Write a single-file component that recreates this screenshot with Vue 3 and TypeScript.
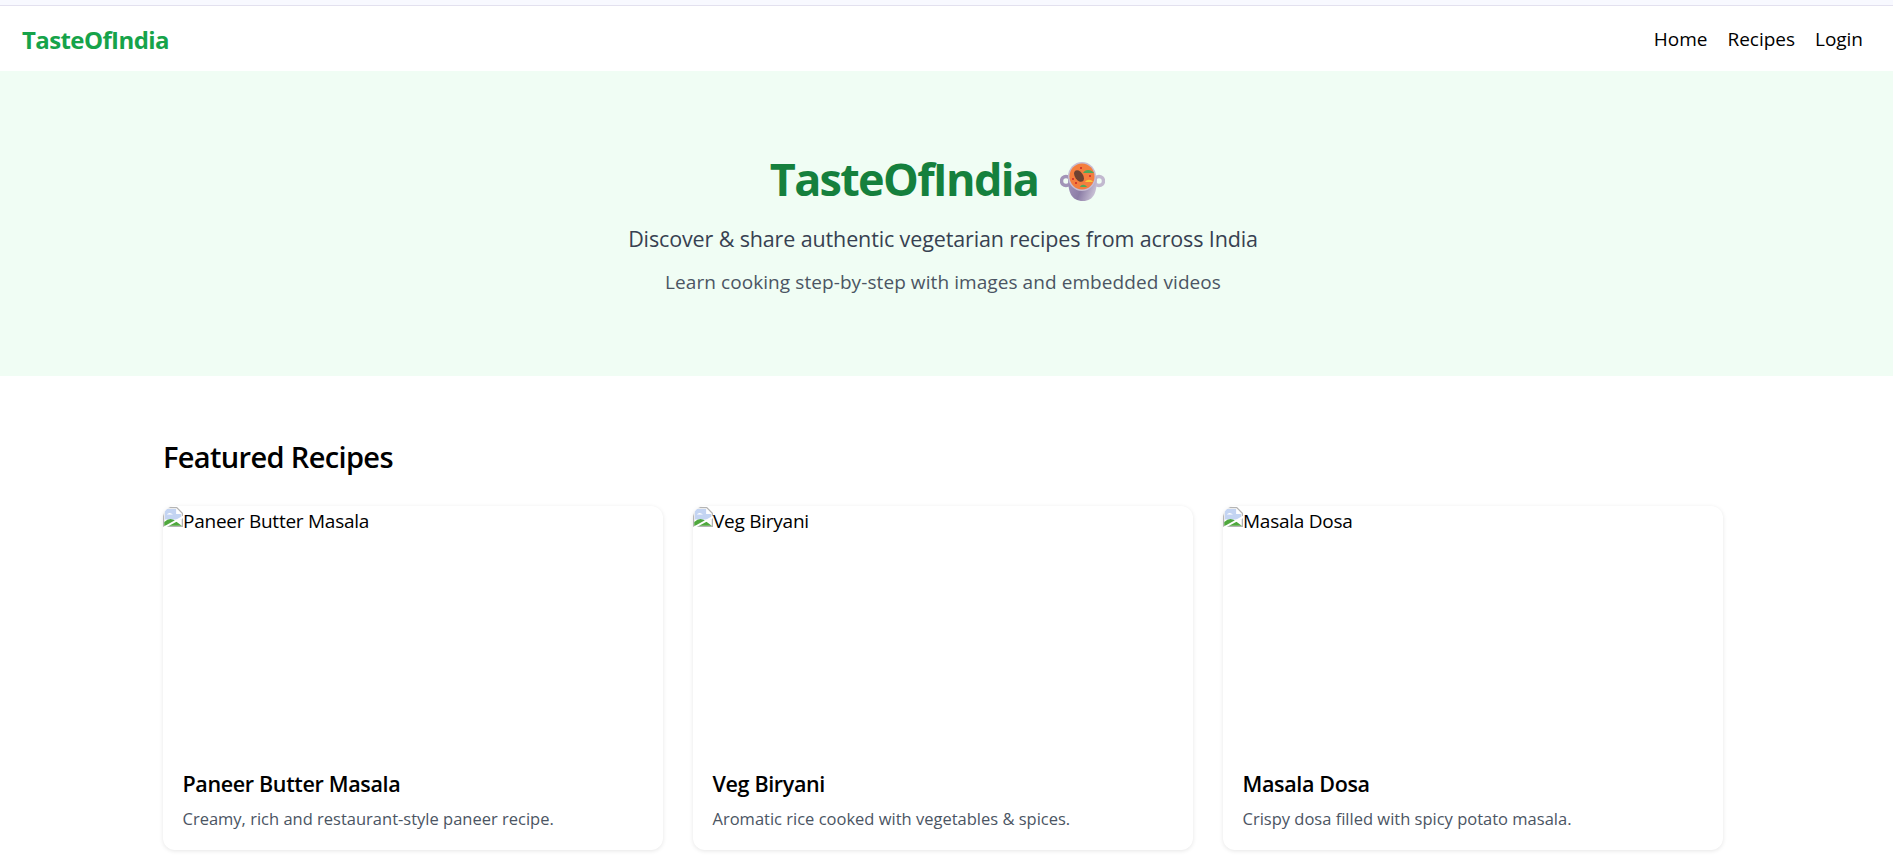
<template>
  <div class="page">
    <div class="top-strip"></div>
    <nav class="navbar">
      <a class="brand">TasteOfIndia</a>
      <div class="nav-links">
        <a v-for="link in links" :key="link">{{ link }}</a>
      </div>
    </nav>

    <section class="hero">
      <h1>
        TasteOfIndia
        <svg class="pot" viewBox="0 0 45 39" width="45" height="39" aria-hidden="true">
          <defs>
            <linearGradient id="potBody" x1="0" y1="0" x2="1" y2="0.3">
              <stop offset="0" stop-color="#a596bd" />
              <stop offset="0.55" stop-color="#8c7da6" />
              <stop offset="1" stop-color="#c5bcd2" />
            </linearGradient>
          </defs>
          <circle cx="6" cy="19" r="4.5" fill="none" stroke="#a294b8" stroke-width="3.5" />
          <circle cx="39" cy="19" r="4.5" fill="none" stroke="#c2b9cf" stroke-width="3.5" />
          <path d="M8 15 C8 30 11 39 23 39 C34 39 37 30 37 15 Z" fill="url(#potBody)" />
          <ellipse cx="22" cy="14.5" rx="14" ry="14.5" fill="#c6bdd3" />
          <ellipse cx="22" cy="14.5" rx="12.5" ry="13" fill="#f47e3e" />
          <ellipse cx="19" cy="14" rx="4" ry="6.5" transform="rotate(-35 19 14)" fill="#6d4232" />
          <path d="M23 11 C25 7 31 7 34 11 Z" fill="#4fa85a" />
          <path d="M25 20 C27 17 31 17 33 20 Z" fill="#f8c93a" />
          <path d="M20 25 C21 22 25 22 27 25 Z" fill="#4fa85a" />
          <rect x="20" y="5" width="2" height="2" fill="#d33b2c" />
          <rect x="29" y="13" width="2" height="2" fill="#d33b2c" />
          <rect x="12" y="16" width="2" height="2" fill="#d33b2c" />
          <rect x="15" y="20" width="2" height="2" fill="#d33b2c" />
        </svg>
      </h1>
      <p class="lead">Discover &amp; share authentic vegetarian recipes from across India</p>
      <p class="sub">Learn cooking step-by-step with images and embedded videos</p>
    </section>

    <main class="featured">
      <h2>Featured Recipes</h2>
      <div class="grid">
        <article v-for="r in recipes" :key="r.title" class="card">
          <div class="card-img">
            <svg class="broken" viewBox="0 0 16 16" width="20" height="20" aria-hidden="true">
              <path d="M0.5 0.5 H11 L15.5 5 V15.5 H0.5 Z" fill="#fff" stroke="#b4b4b4" />
              <path d="M1.5 1.5 H10.5 V5.5 H14.5 V10 H1.5 Z" fill="#c3d4f2" />
              <path d="M3 6 Q5 3.5 8 6 Z" fill="#fff" />
              <path d="M1 15 V12 Q6 7 11 12 L15 15 Z" fill="#4fa83d" />
              <path d="M0 16 L16 7 V9 L3 16 Z" fill="#fff" />
            </svg>
            <span>{{ r.title }}</span>
          </div>
          <div class="card-body">
            <h3>{{ r.title }}</h3>
            <p>{{ r.desc }}</p>
          </div>
        </article>
      </div>
    </main>
  </div>
</template>

<script setup lang="ts">
const links: string[] = ['Home', 'Recipes', 'Login'];

const recipes: { title: string; desc: string }[] = [
  { title: 'Paneer Butter Masala', desc: 'Creamy, rich and restaurant-style paneer recipe.' },
  { title: 'Veg Biryani', desc: 'Aromatic rice cooked with vegetables & spices.' },
  { title: 'Masala Dosa', desc: 'Crispy dosa filled with spicy potato masala.' }
];
</script>

<style>
html, body { margin: 0; background: #fff; overflow: hidden; }
</style>

<style scoped>
.page {
  width: 1893px;
  height: 858px;
  overflow: hidden;
  font-family: "Open Sans", "Noto Sans", sans-serif;
  color: #000;
}

.top-strip {
  height: 5px;
  background: #f8f9ff;
  border-bottom: 1px solid #e3e1ef;
}

.navbar {
  height: 65px;
  padding: 1px 30px 0 22px;
  box-sizing: border-box;
  display: flex;
  justify-content: space-between;
  align-items: center;
  background: #fff;
}
.brand { font-size: 24px; font-weight: 700; color: #16a34a; letter-spacing: -0.6px; }
.nav-links { display: flex; gap: 20px; font-size: 19px; letter-spacing: -0.02px; }

.hero {
  height: 305px;
  box-sizing: border-box;
  padding: 80px 7px 0 0;
  background: #f0fdf4;
  text-align: center;
}
.hero h1 {
  margin: 0;
  font-size: 45px;
  line-height: 56px;
  font-weight: 700;
  color: #15803d;
  letter-spacing: -1.7px;
}
.pot { vertical-align: -5px; margin: 0 11px 0 12px; }
.lead { margin: 17px 0 0; font-size: 21.5px; line-height: 30px; color: #374151; letter-spacing: -0.13px; }
.sub { margin: 14px 0 0; font-size: 19px; line-height: 28px; color: #4b5563; letter-spacing: 0.08px; }

.featured { padding: 58px 0 0 163px; }
.featured h2 { margin: 0 0 26px; font-size: 29px; line-height: 46px; font-weight: 600; letter-spacing: -0.65px; }

.grid { display: grid; grid-template-columns: repeat(3, 500px); gap: 30px; }
.card {
  height: 344px;
  border-radius: 12px;
  background: #fff;
  box-shadow: 0 1px 4px rgba(0, 0, 0, 0.1);
  overflow: hidden;
}
.card-img { height: 240px; font-size: 19px; line-height: 30px; letter-spacing: -0.25px; }
.broken { vertical-align: 1px; }
.card-body { padding: 23px 20px 0 19.5px; }
.card-body h3 { margin: 0; font-size: 21.5px; line-height: 30px; font-weight: 600; letter-spacing: -0.35px; }
.card-body p { margin: 7px 0 0; font-size: 16.5px; line-height: 26px; color: #4b5563; letter-spacing: 0; }
</style>
